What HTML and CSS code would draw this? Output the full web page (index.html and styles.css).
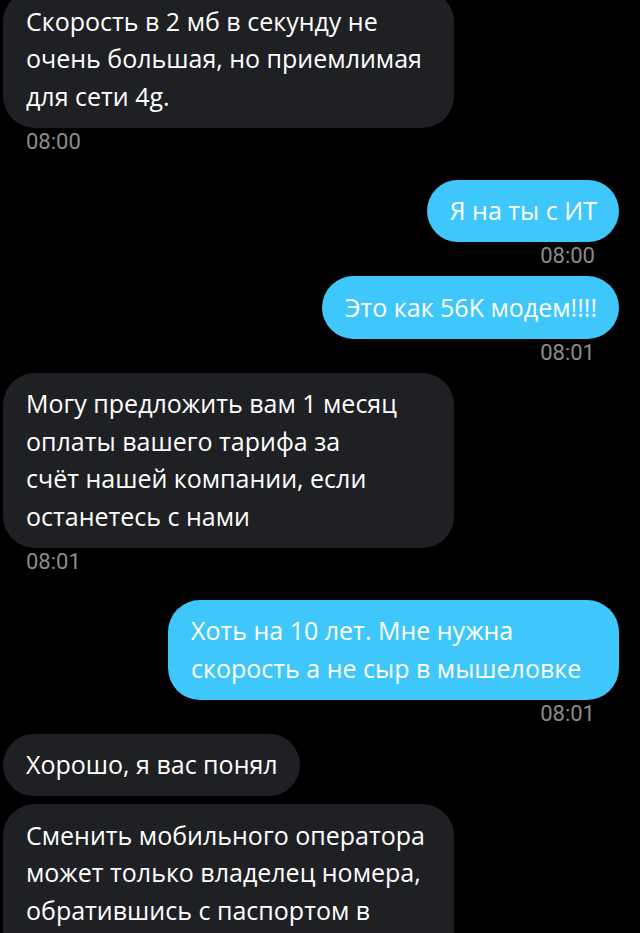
FILE: index.html
```html
<!DOCTYPE html>
<html lang="ru">
<head>
    <meta charset="UTF-8">
    <meta name="viewport" content="width=device-width, initial-scale=1.0">
    <link rel="stylesheet" href="styles.css">
    <title>Чат</title>
</head>
<body>

<div id="chat">
    <div class="msg in">
        <div class="bubble">Скорость в 2 мб в секунду не очень большая, но приемлимая для сети 4g.</div>
        <div class="time">08:00</div>
    </div>

    <div class="msg out">
        <div class="bubble">Я на ты с ИТ</div>
        <div class="time">08:00</div>
    </div>
    <div class="msg out">
        <div class="bubble">Это как 56K модем!!!!</div>
        <div class="time">08:01</div>
    </div>

    <div class="msg in">
        <div class="bubble">Могу предложить вам 1 месяц оплаты вашего тарифа за<br>счёт нашей компании, если останетесь с нами</div>
        <div class="time">08:01</div>
    </div>

    <div class="msg out">
        <div class="bubble">Хоть на 10 лет. Мне нужна скорость а не сыр в мышеловке</div>
        <div class="time">08:01</div>
    </div>

    <div class="msg in">
        <div class="bubble">Хорошо, я вас понял</div>
    </div>
    <div class="msg in">
        <div class="bubble last">Сменить мобильного оператора может только владелец номера, обратившись с паспортом в</div>
    </div>
</div>

</body>
</html>
```

FILE: styles.css
```css
body {
    margin: 0;
    background-color: #000;
    font-family: "Open Sans", "Noto Sans", sans-serif;
    overflow: hidden;
}

#chat {
    display: flex;
    flex-direction: column;
    margin-top: -10px;
    padding: 0 21px 0 3px;
}

.msg {
    display: flex;
    flex-direction: column;
    margin-bottom: 8px;
}

.msg.in {
    align-items: flex-start;
}

.msg.out {
    align-items: flex-end;
}

/* a reply to an incoming message gets a bit more room */
.msg.in + .msg.out {
    margin-top: 18px;
}

.bubble {
    max-width: 406px;
    padding: 12.5px 22px 12.5px 23px;
    border-radius: 32px;
    font-size: 25px;
    line-height: 37.5px;
    color: #fff;
}

.in .bubble {
    background-color: #1f2024;
}

.out .bubble {
    background-color: #3fc7fc;
}

.bubble.last {
    padding-bottom: 60px;
}

.time {
    font-family: Roboto, "Liberation Sans", sans-serif;
    font-size: 22px;
    line-height: 24px;
    color: #8b8b8b;
    padding: 2px 24px 0 23px;
}
```
